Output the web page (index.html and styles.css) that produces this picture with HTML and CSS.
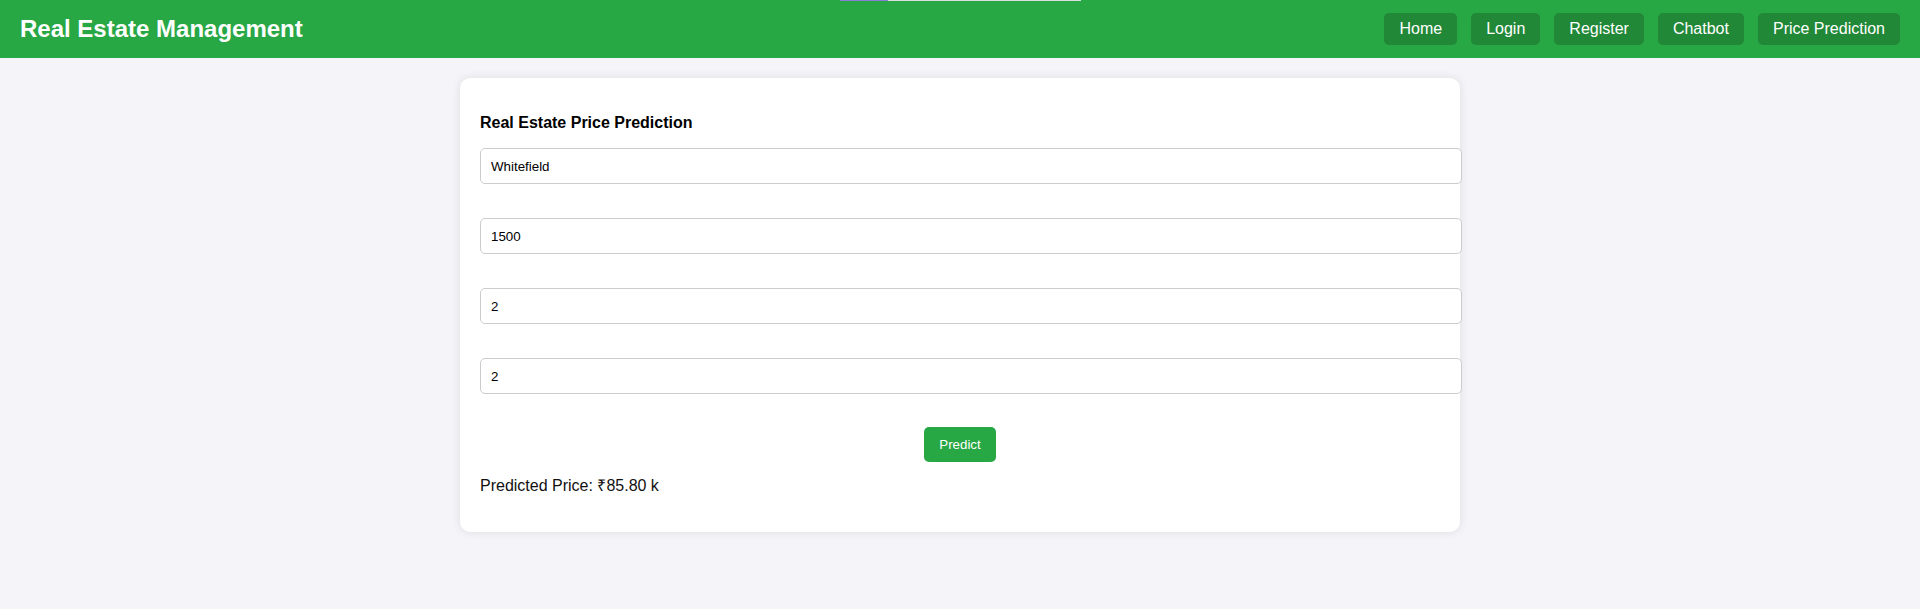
FILE: index.html
```html
<!DOCTYPE html>
<html lang="en">
<head>
<meta charset="UTF-8">
<title>Real Estate Management</title>
<link rel="stylesheet" href="styles.css">
</head>
<body>
<div class="top-strip"><div class="top-strip-fill"></div></div>
<header class="site-header">
  <h1 class="brand">Real Estate Management</h1>
  <nav class="nav">
    <a class="nav-link" href="#">Home</a>
    <a class="nav-link" href="#">Login</a>
    <a class="nav-link" href="#">Register</a>
    <a class="nav-link" href="#">Chatbot</a>
    <a class="nav-link" href="#">Price Prediction</a>
  </nav>
</header>
<main class="card">
  <h3 class="card-title">Real Estate Price Prediction</h3>
  <form class="form">
    <input class="field" type="text" value="Whitefield">
    <input class="field" type="text" value="1500">
    <input class="field" type="text" value="2">
    <input class="field" type="text" value="2">
    <div class="actions"><button class="btn" type="button">Predict</button></div>
  </form>
  <p class="result">Predicted Price: ₹85.80 k</p>
</main>
</body>
</html>
```
FILE: styles.css
```css
* { box-sizing: border-box; }
html, body { margin: 0; padding: 0; }
body {
  background: #f4f4f9;
  font-family: "Liberation Sans", Arial, sans-serif;
  color: #111;
}
.top-strip {
  position: absolute;
  top: 0;
  left: 840px;
  width: 241px;
  height: 1px;
  background: #dcdcdc;
  z-index: 5;
}
.top-strip-fill {
  width: 48px;
  height: 1px;
  background: #8a80d8;
}
.site-header {
  background: #28a745;
  display: flex;
  align-items: center;
  justify-content: space-between;
  padding: 15px 20px;
  height: 58px;
}
.brand {
  margin: 0;
  color: #fff;
  font-size: 24px;
  font-weight: bold;
  line-height: 28px;
}
.nav {
  display: flex;
  gap: 14px;
}
.nav-link {
  display: block;
  color: #fff;
  text-decoration: none;
  font-size: 16px;
  line-height: 18px;
  padding: 7px 15px;
  background: #218838;
  border-radius: 5px;
}
.card {
  width: 1000px;
  margin: 20px auto;
  background: #fff;
  padding: 20px;
  border-radius: 10px;
  box-shadow: 0 0 10px rgba(0, 0, 0, 0.1);
}
.card-title {
  margin: 16px 0 16px;
  font-size: 16px;
  line-height: 18px;
  font-weight: bold;
  color: #000;
}
.form {
  display: flex;
  flex-direction: column;
  gap: 34px;
}
.field {
  box-sizing: content-box;
  width: 100%;
  height: 14px;
  padding: 10px;
  border: 1px solid #ccc;
  border-radius: 5px;
  font-family: "Liberation Sans", Arial, sans-serif;
  font-size: 13.333px;
  color: #000;
  margin: 0;
  background: #fff;
}
.actions {
  display: flex;
  justify-content: center;
  margin-top: -1px;
}
.btn {
  background: #28a745;
  color: #fff;
  border: none;
  border-radius: 5px;
  padding: 10px 15px;
  font-family: "Liberation Sans", Arial, sans-serif;
  font-size: 13.333px;
  line-height: 15px;
  cursor: pointer;
}
.result {
  margin: 15px 0 17px;
  font-size: 16px;
  line-height: 18px;
  color: #111;
}
```
